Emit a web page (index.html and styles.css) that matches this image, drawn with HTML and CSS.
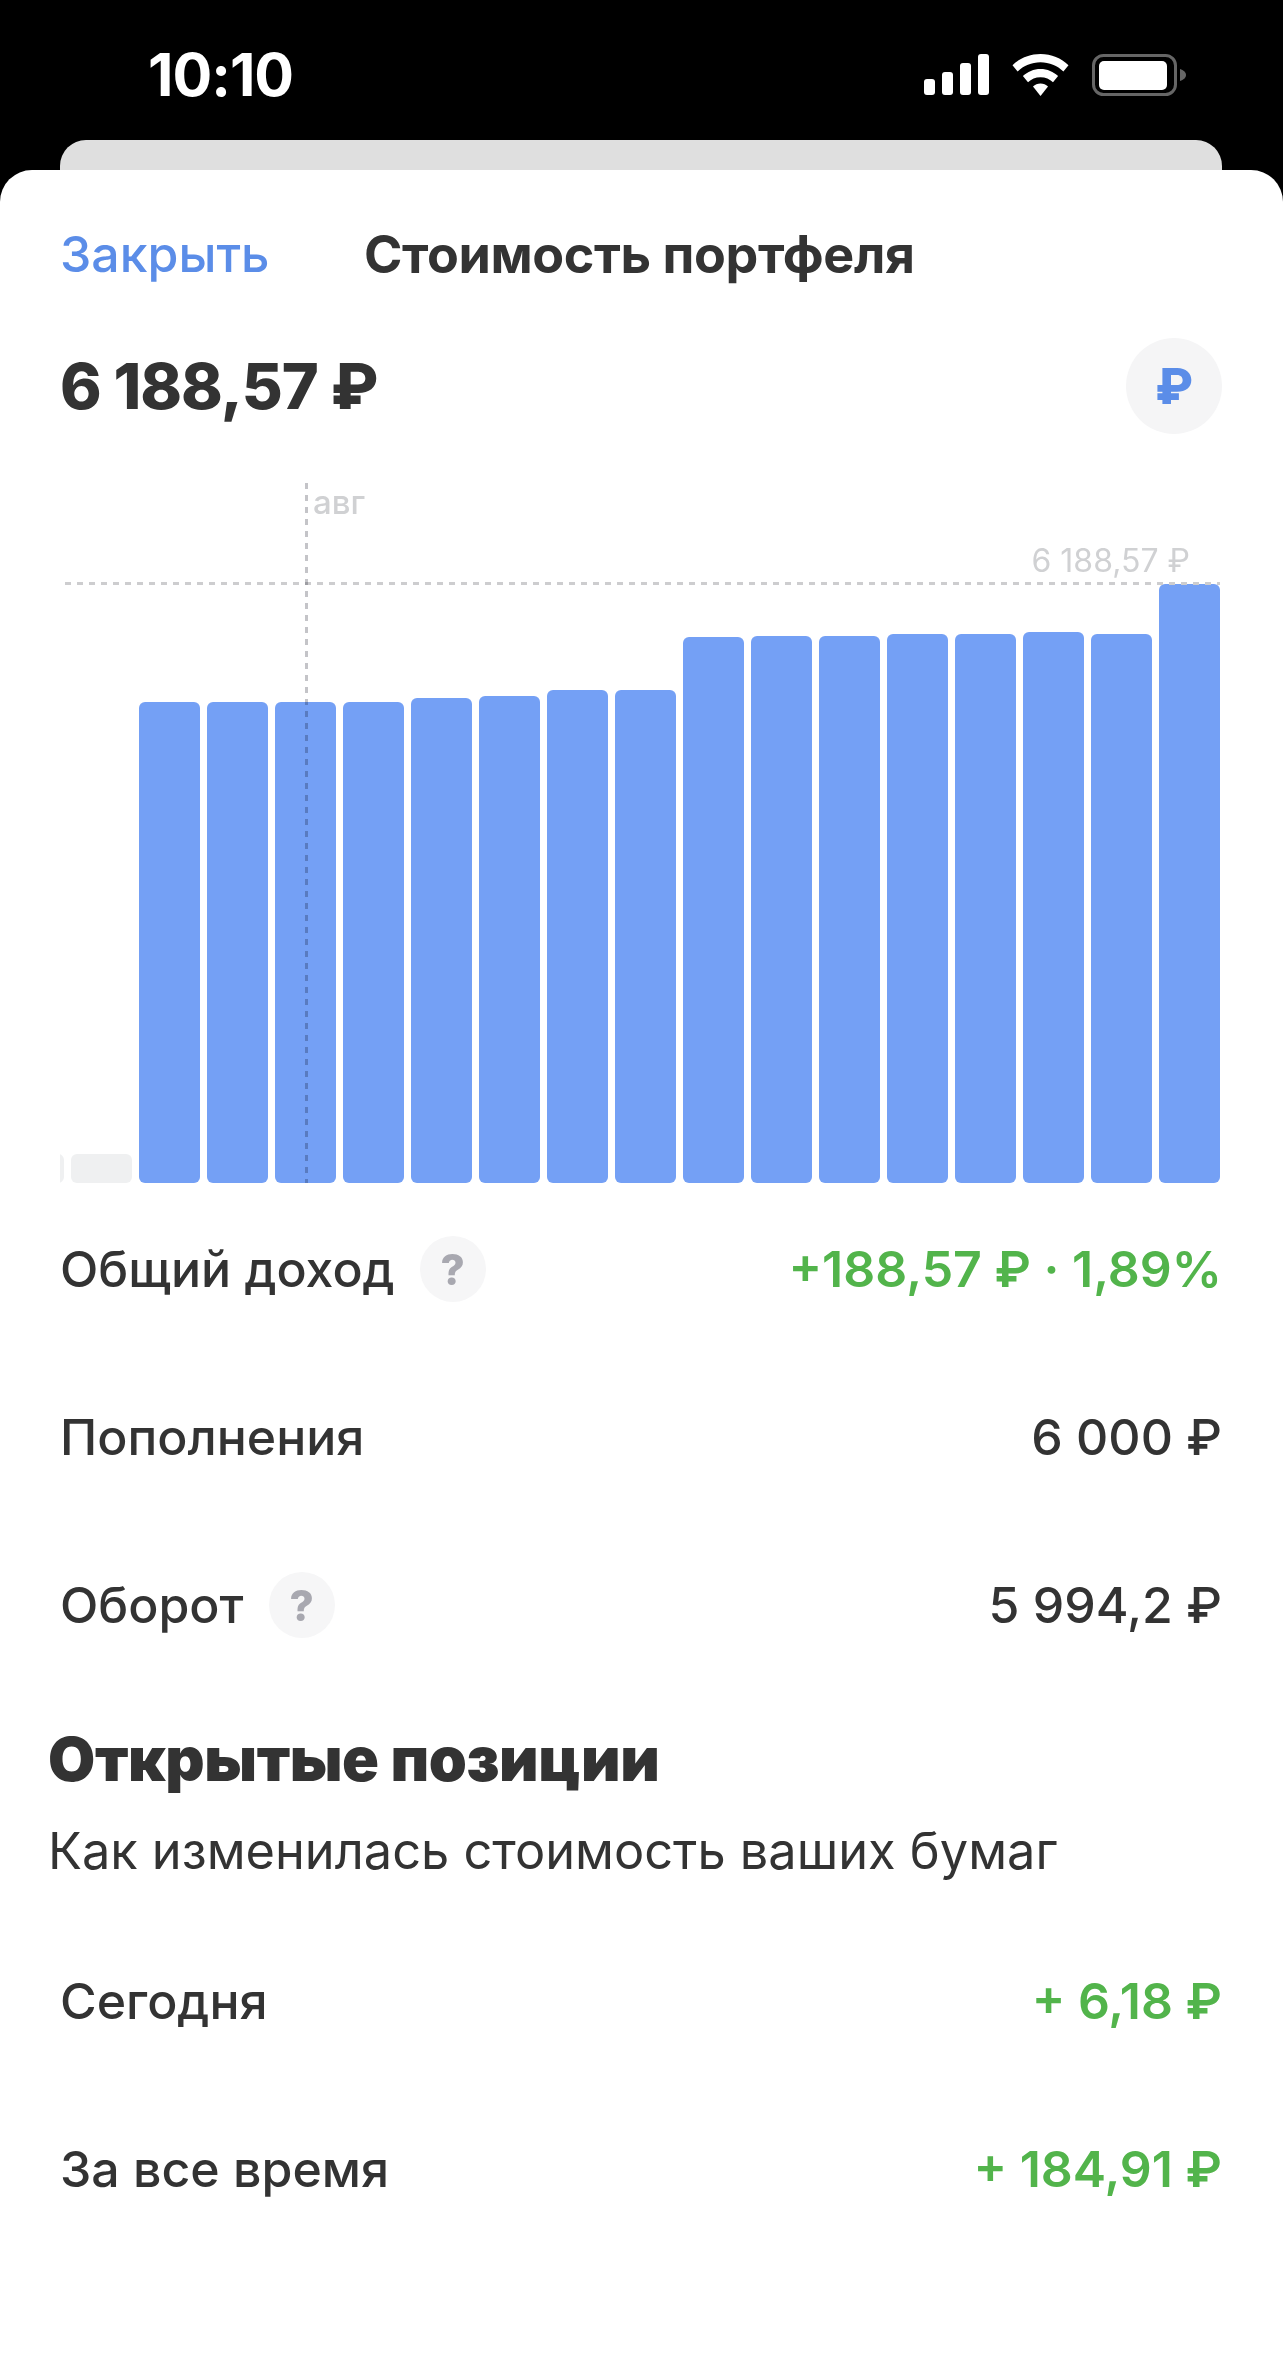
FILE: index.html
```html
<!DOCTYPE html>
<html lang="ru">
<head>
    <meta charset="UTF-8">
    <meta name="viewport" content="width=device-width, initial-scale=1.0">
    <title>Стоимость портфеля</title>
    <link rel="stylesheet" href="styles.css">
</head>
<body>
    <div class="status-bar">
        <span class="time">10:10</span>
        <div class="status-icons">
            <svg class="signal" width="65" height="41" viewBox="0 0 65 41" fill="#fff">
                <rect x="0" y="25" width="11" height="16" rx="3"/>
                <rect x="18" y="18" width="11" height="23" rx="3"/>
                <rect x="36" y="9" width="11" height="32" rx="3"/>
                <rect x="54" y="0" width="11" height="41" rx="3"/>
            </svg>
            <svg class="wifi" width="57" height="42" viewBox="0 0 57 42" fill="#fff">
                <path d="M28.5 0C17.6 0 7.8 4.2 0.5 11.2L5.6 17.4C11.6 11.7 19.6 8.2 28.5 8.2S45.400 11.7 51.400 17.4L56.500 11.200C49.200 4.200 39.400 0 28.500 0Z"/>
                <path d="M28.500 15C21.700 15 15.500 17.700 10.900 22.100L16 28.200C19.200 25.100 23.600 23.200 28.500 23.200S37.800 25.100 41 28.200L46.100 22.100C41.500 17.700 35.300 15 28.500 15Z"/>
                <path d="M28.500 29.500C25.600 29.500 23 30.600 21 32.500L28.500 42L36 32.500C34 30.600 31.400 29.500 28.500 29.500Z"/>
            </svg>
            <svg class="battery" width="94" height="42" viewBox="0 0 94 42">
                <rect x="1.500" y="1.500" width="82" height="39" rx="10" fill="none" stroke="#666" stroke-width="3"/>
                <rect x="7" y="7" width="68" height="29" rx="5" fill="#fff"/>
                <path d="M88 15c3.500 1 6 3.300 6 6s-2.500 5-6 6z" fill="#666"/>
            </svg>
        </div>
    </div>

    <div class="back-card"></div>

    <main class="sheet">
        <header class="nav">
            <a class="nav-close">Закрыть</a>
            <h1 class="nav-title">Стоимость портфеля</h1>
        </header>

        <div class="amount-row">
            <span class="amount">6 188,57 ₽</span>
            <span class="currency-btn">₽</span>
        </div>

        <div class="chart">
            <div class="bars">
                <div class="bar empty"></div>
                <div class="bar empty"></div>
                <div class="bar" style="height: 481px"></div>
                <div class="bar" style="height: 481px"></div>
                <div class="bar" style="height: 481px"></div>
                <div class="bar" style="height: 481px"></div>
                <div class="bar" style="height: 485px"></div>
                <div class="bar" style="height: 487px"></div>
                <div class="bar" style="height: 493px"></div>
                <div class="bar" style="height: 493px"></div>
                <div class="bar" style="height: 546px"></div>
                <div class="bar" style="height: 547px"></div>
                <div class="bar" style="height: 547px"></div>
                <div class="bar" style="height: 549px"></div>
                <div class="bar" style="height: 549px"></div>
                <div class="bar" style="height: 551px"></div>
                <div class="bar" style="height: 549px"></div>
                <div class="bar" style="height: 599px"></div>
            </div>
            <div class="max-line"></div>
            <span class="max-label">6 188,57 ₽</span>
            <div class="month-line"></div>
            <span class="month-label">авг</span>
        </div>

        <section class="rows">
            <div class="row">
                <div class="row-name">Общий доход <span class="help">?</span></div>
                <div class="row-value green">+188,57 ₽ · 1,89%</div>
            </div>
            <div class="row">
                <div class="row-name">Пополнения</div>
                <div class="row-value">6 000 ₽</div>
            </div>
            <div class="row">
                <div class="row-name">Оборот <span class="help">?</span></div>
                <div class="row-value">5 994,2 ₽</div>
            </div>
        </section>

        <section class="positions">
            <h2>Открытые позиции</h2>
            <p>Как изменилась стоимость ваших бумаг</p>
        </section>

        <section class="rows rows-positions">
            <div class="row">
                <div class="row-name">Сегодня</div>
                <div class="row-value green">+ 6,18 ₽</div>
            </div>
            <div class="row">
                <div class="row-name">За все время</div>
                <div class="row-value green">+ 184,91 ₽</div>
            </div>
        </section>
    </main>
</body>
</html>
```

FILE: styles.css
```css
body {
    margin: 0;
    background: #000;
    font-family: Inter, "Noto Sans", sans-serif;
    color: #333;
    overflow: hidden;
}

.status-bar {
    height: 140px;
    display: flex;
    justify-content: space-between;
    align-items: center;
    padding: 9px 97px 0 148px;
    box-sizing: border-box;
    color: #fff;
}
.time {
    font-size: 59px;
    font-weight: 700;
    letter-spacing: -1px;
}
.status-icons {
    display: flex;
    align-items: center;
    gap: 23px;
}
.status-icons svg {
    display: block;
}

.back-card {
    height: 30px;
    margin: 0 61px 0 60px;
    background: #dfdfdf;
    border-radius: 26px 26px 0 0;
}

.sheet {
    background: #fff;
    border-radius: 32px 32px 0 0;
    height: 2196px;
    padding: 0 61px 0 60px;
    box-sizing: border-box;
}

.nav {
    display: flex;
    align-items: center;
    height: 168px;
}
.nav-close {
    color: #5b8de8;
    font-size: 50px;
    font-weight: 500;
    width: 304px;
}
.nav-title {
    margin: 0;
    font-size: 52px;
    font-weight: 700;
    letter-spacing: -0.4px;
}

.amount-row {
    display: flex;
    justify-content: space-between;
    align-items: center;
    height: 96px;
}
.amount {
    font-size: 63px;
    font-weight: 800;
    letter-spacing: -1px;
}
.currency-btn {
    width: 96px;
    height: 96px;
    border-radius: 50%;
    background: #f5f5f6;
    color: #5b8de8;
    font-size: 50px;
    font-weight: 800;
    display: flex;
    align-items: center;
    justify-content: center;
}

.chart {
    position: relative;
    height: 700px;
    margin: 49px 2px 0 0;
}
.bars {
    height: 100%;
    display: flex;
    justify-content: flex-end;
    align-items: flex-end;
    gap: 7px;
    overflow: hidden;
}
.bar {
    flex: 0 0 61px;
    background: #74a0f5;
    border-radius: 6px;
}
.bar.empty {
    height: 29px;
    background: #eff0f1;
}
.max-line {
    position: absolute;
    left: 5px;
    right: 0;
    top: 99px;
    height: 3px;
    background: repeating-linear-gradient(90deg, #cdcdcf 0 6px, transparent 6px 12px);
}
.max-label {
    position: absolute;
    right: 30px;
    top: 59px;
    font-size: 32px;
    line-height: 38px;
    color: #d0d1d3;
}
.month-line {
    position: absolute;
    left: 245px;
    top: 0;
    bottom: 0;
    width: 3px;
    background: repeating-linear-gradient(180deg, #c4c4c8 0 6px, transparent 6px 12px);
    mix-blend-mode: multiply;
}
.month-label {
    position: absolute;
    left: 253px;
    top: 0;
    font-size: 33px;
    line-height: 38px;
    font-weight: 500;
    color: #d0d1d3;
}

.rows {
    padding-top: 2px;
}
.row {
    display: flex;
    justify-content: space-between;
    align-items: center;
    height: 168px;
}
.row-name {
    display: flex;
    align-items: center;
    font-size: 50px;
    font-weight: 500;
}
.row-value {
    font-size: 50px;
    font-weight: 500;
}
.green {
    color: #52b44b;
    font-weight: 600;
}
.help {
    width: 66px;
    height: 66px;
    margin-left: 25px;
    border-radius: 50%;
    background: #f6f6f7;
    color: #a8a8b0;
    font-size: 42px;
    font-weight: 800;
    display: flex;
    align-items: center;
    justify-content: center;
}

.positions {
    margin: 35px 0 0 -12px;
}
.positions h2 {
    margin: 0;
    font-size: 61px;
    line-height: 70px;
    font-weight: 900;
    letter-spacing: -0.4px;
}
.positions p {
    margin: 29px 0 0;
    font-size: 50.500px;
    line-height: 56px;
    font-weight: 400;
}

.rows-positions {
    padding-top: 38px;
}
```
